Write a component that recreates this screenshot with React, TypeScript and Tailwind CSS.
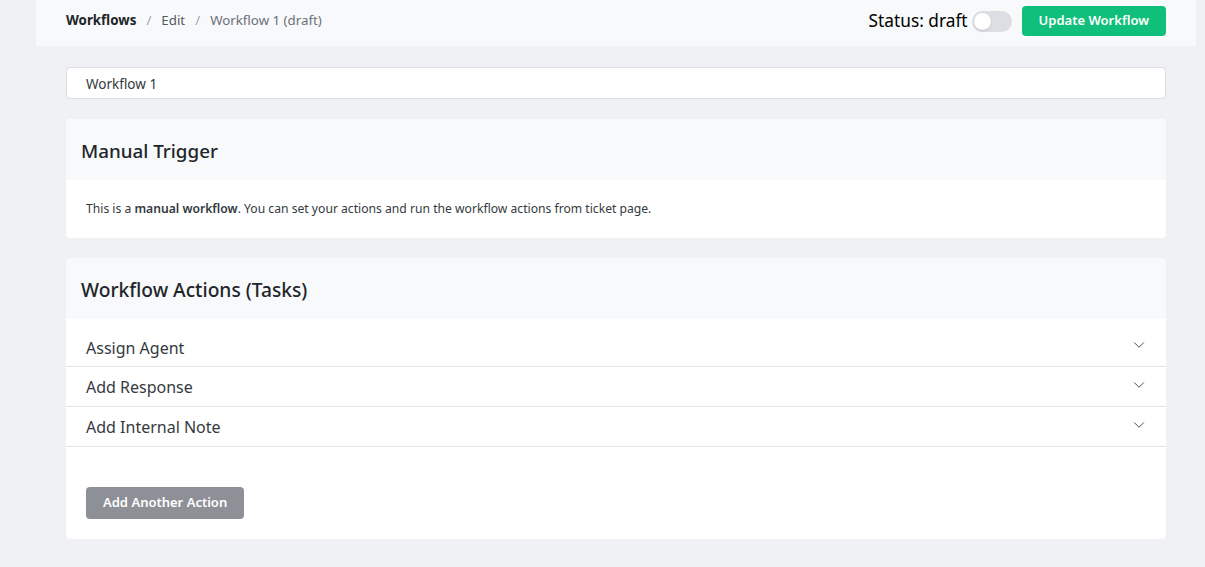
import { ChevronDown } from "lucide-react";

const actions = ["Assign Agent", "Add Response", "Add Internal Note"];

export default function App() {
  return (
    <div className="min-h-[567px] bg-[#f0f1f5] font-['Noto_Sans',sans-serif] text-[#212529]">
      <div className="mx-[36px] mr-[9px] flex h-[46px] items-center justify-between bg-[#f8f9fb] pb-[4px] pl-[30px] pr-[30px]">
        <div className="flex items-center gap-[10px] text-[13.3px]">
          <span className="font-bold text-[#212529]">Workflows</span>
          <span className="text-[#a0a4ab]">/</span>
          <span className="text-[#555a62]">Edit</span>
          <span className="text-[#a0a4ab]">/</span>
          <span className="text-[#6b7079]">Workflow 1 (draft)</span>
        </div>
        <div className="flex items-center">
          <span className="text-[17.3px] text-black">Status: draft</span>
          <div className="ml-[4px] flex h-[21px] w-[40px] items-center rounded-full bg-[#dcdee4] p-[2px]">
            <div className="h-[17px] w-[17px] rounded-full bg-white shadow-sm" />
          </div>
          <button className="ml-[10px] h-[30px] rounded bg-[#10bf7a] px-[17px] text-[13px] font-semibold text-white">
            Update Workflow
          </button>
        </div>
      </div>

      <div className="mx-[66px] mr-[39px] flex flex-col pt-[21px]">
        <div className="flex h-[32px] items-center rounded border border-[#dcdee4] bg-white px-[19px] pt-[2px] text-[13.5px] text-[#343a40]">
          Workflow 1
        </div>

        <div className="mt-[20px] overflow-hidden rounded bg-white">
          <div className="flex h-[61px] items-center bg-[#f8f9fb] px-[15px] pt-[3px] text-[18.8px] font-medium text-[#212529]">
            Manual Trigger
          </div>
          <div className="flex h-[58px] items-center px-[20px] pt-[1px] text-[12.15px] text-[#343a40]">
            <span>
              This is a <span className="font-semibold">manual workflow</span>. You can set your actions and run the workflow actions from ticket page.
            </span>
          </div>
        </div>

        <div className="mt-[20px] overflow-hidden rounded bg-white">
          <div className="flex h-[61px] items-center bg-[#f8f9fb] px-[15px] pt-[3px] text-[19.2px] font-medium text-[#212529]">
            Workflow Actions (Tasks)
          </div>
          <div className="flex flex-col">
            {actions.map((a, i) => (
              <div
                key={a}
                className={`flex items-center justify-between border-b border-[#e3e5e9] pl-[20px] pr-[18px] ${i === 0 ? "h-[48px] pt-[10px]" : "h-[40px] pt-[1px]"}`}
              >
                <span className="text-[16px] text-[#343a40]">{a}</span>
                <ChevronDown className="-mt-[5px] h-[18px] w-[18px] text-[#444]" strokeWidth={1.3} />
              </div>
            ))}
          </div>
          <div className="px-[20px] pb-[20px] pt-[40px]">
            <button className="h-[32px] rounded bg-[#8e9097] px-[17px] text-[13px] font-semibold text-white">
              Add Another Action
            </button>
          </div>
        </div>
      </div>
    </div>
  );
}
